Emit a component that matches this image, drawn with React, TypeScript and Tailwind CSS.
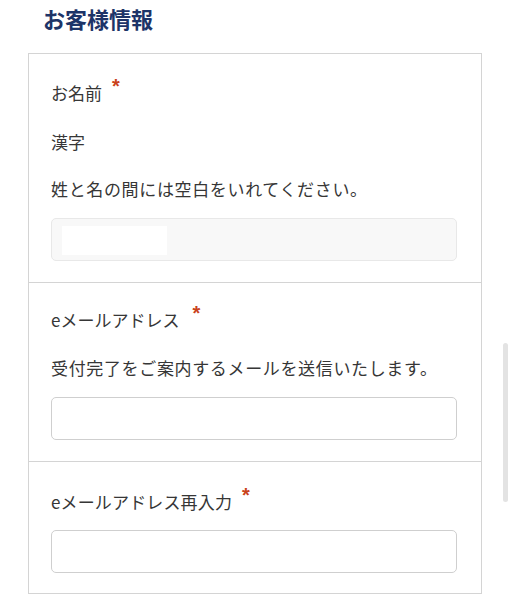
import React from "react";

const font = { fontFamily: '"Noto Sans CJK JP", "Noto Sans", sans-serif' };

function Req({ wide }: { wide?: boolean }) {
  return (
    <span
      className={
        wide
          ? "relative top-[-7px] ml-[13px] text-[20px] leading-none font-bold text-[#c9421c] font-[Liberation_Sans]"
          : "relative top-[-7px] ml-[10px] text-[20px] leading-none font-bold text-[#c9421c] font-[Liberation_Sans]"
      }
    >
      *
    </span>
  );
}

export default function App() {
  return (
    <div className="relative w-[512px] h-[600px] bg-white overflow-hidden text-[#363636]" style={font}>
      <h1 className="pl-[43px] pt-[4px] h-[53px] text-[22px] leading-[28px] font-bold text-[#1d3468]">お客様情報</h1>
      <div className="ml-[28px] w-[454px] border border-[#d4d4d4]">
        <div className="pt-[26px] pb-[21px] pl-[22px] pr-[24px] border-b border-[#d4d4d4]">
          <p className="text-[17px] leading-[26px] mb-[23px]">お名前<Req /></p>
          <p className="text-[17px] leading-[26px] mb-[21px]">漢字</p>
          <p className="text-[17px] leading-[26px] mb-[16px] tracking-[0.65px]">姓と名の間には空白をいれてください。</p>
          <div className="h-[43px] rounded-[5px] border border-[#e8e8e8] bg-[#f8f8f8] pt-[7px] pl-[10px]">
            <div className="w-[105px] h-[29px] bg-white" />
          </div>
        </div>
        <div className="pt-[24px] pb-[21px] pl-[22px] pr-[24px] border-b border-[#d4d4d4]">
          <p className="text-[17px] leading-[26px] mb-[22px]">eメールアドレス<Req wide /></p>
          <p className="text-[17px] leading-[26px] mb-[16px] tracking-[0.65px]">受付完了をご案内するメールを送信いたします。</p>
          <div className="h-[43px] rounded-[5px] border border-[#cfcfcf] bg-white" />
        </div>
        <div className="pt-[27px] pb-[20px] pl-[22px] pr-[24px]">
          <p className="text-[17px] leading-[26px] mb-[15px] tracking-[0.15px]">eメールアドレス再入力<Req /></p>
          <div className="h-[43px] rounded-[5px] border border-[#cfcfcf] bg-white" />
        </div>
      </div>
      <div className="absolute left-[503px] top-[343px] w-[5px] h-[159px] rounded-full bg-[#e3e3e3]" />
    </div>
  );
}
